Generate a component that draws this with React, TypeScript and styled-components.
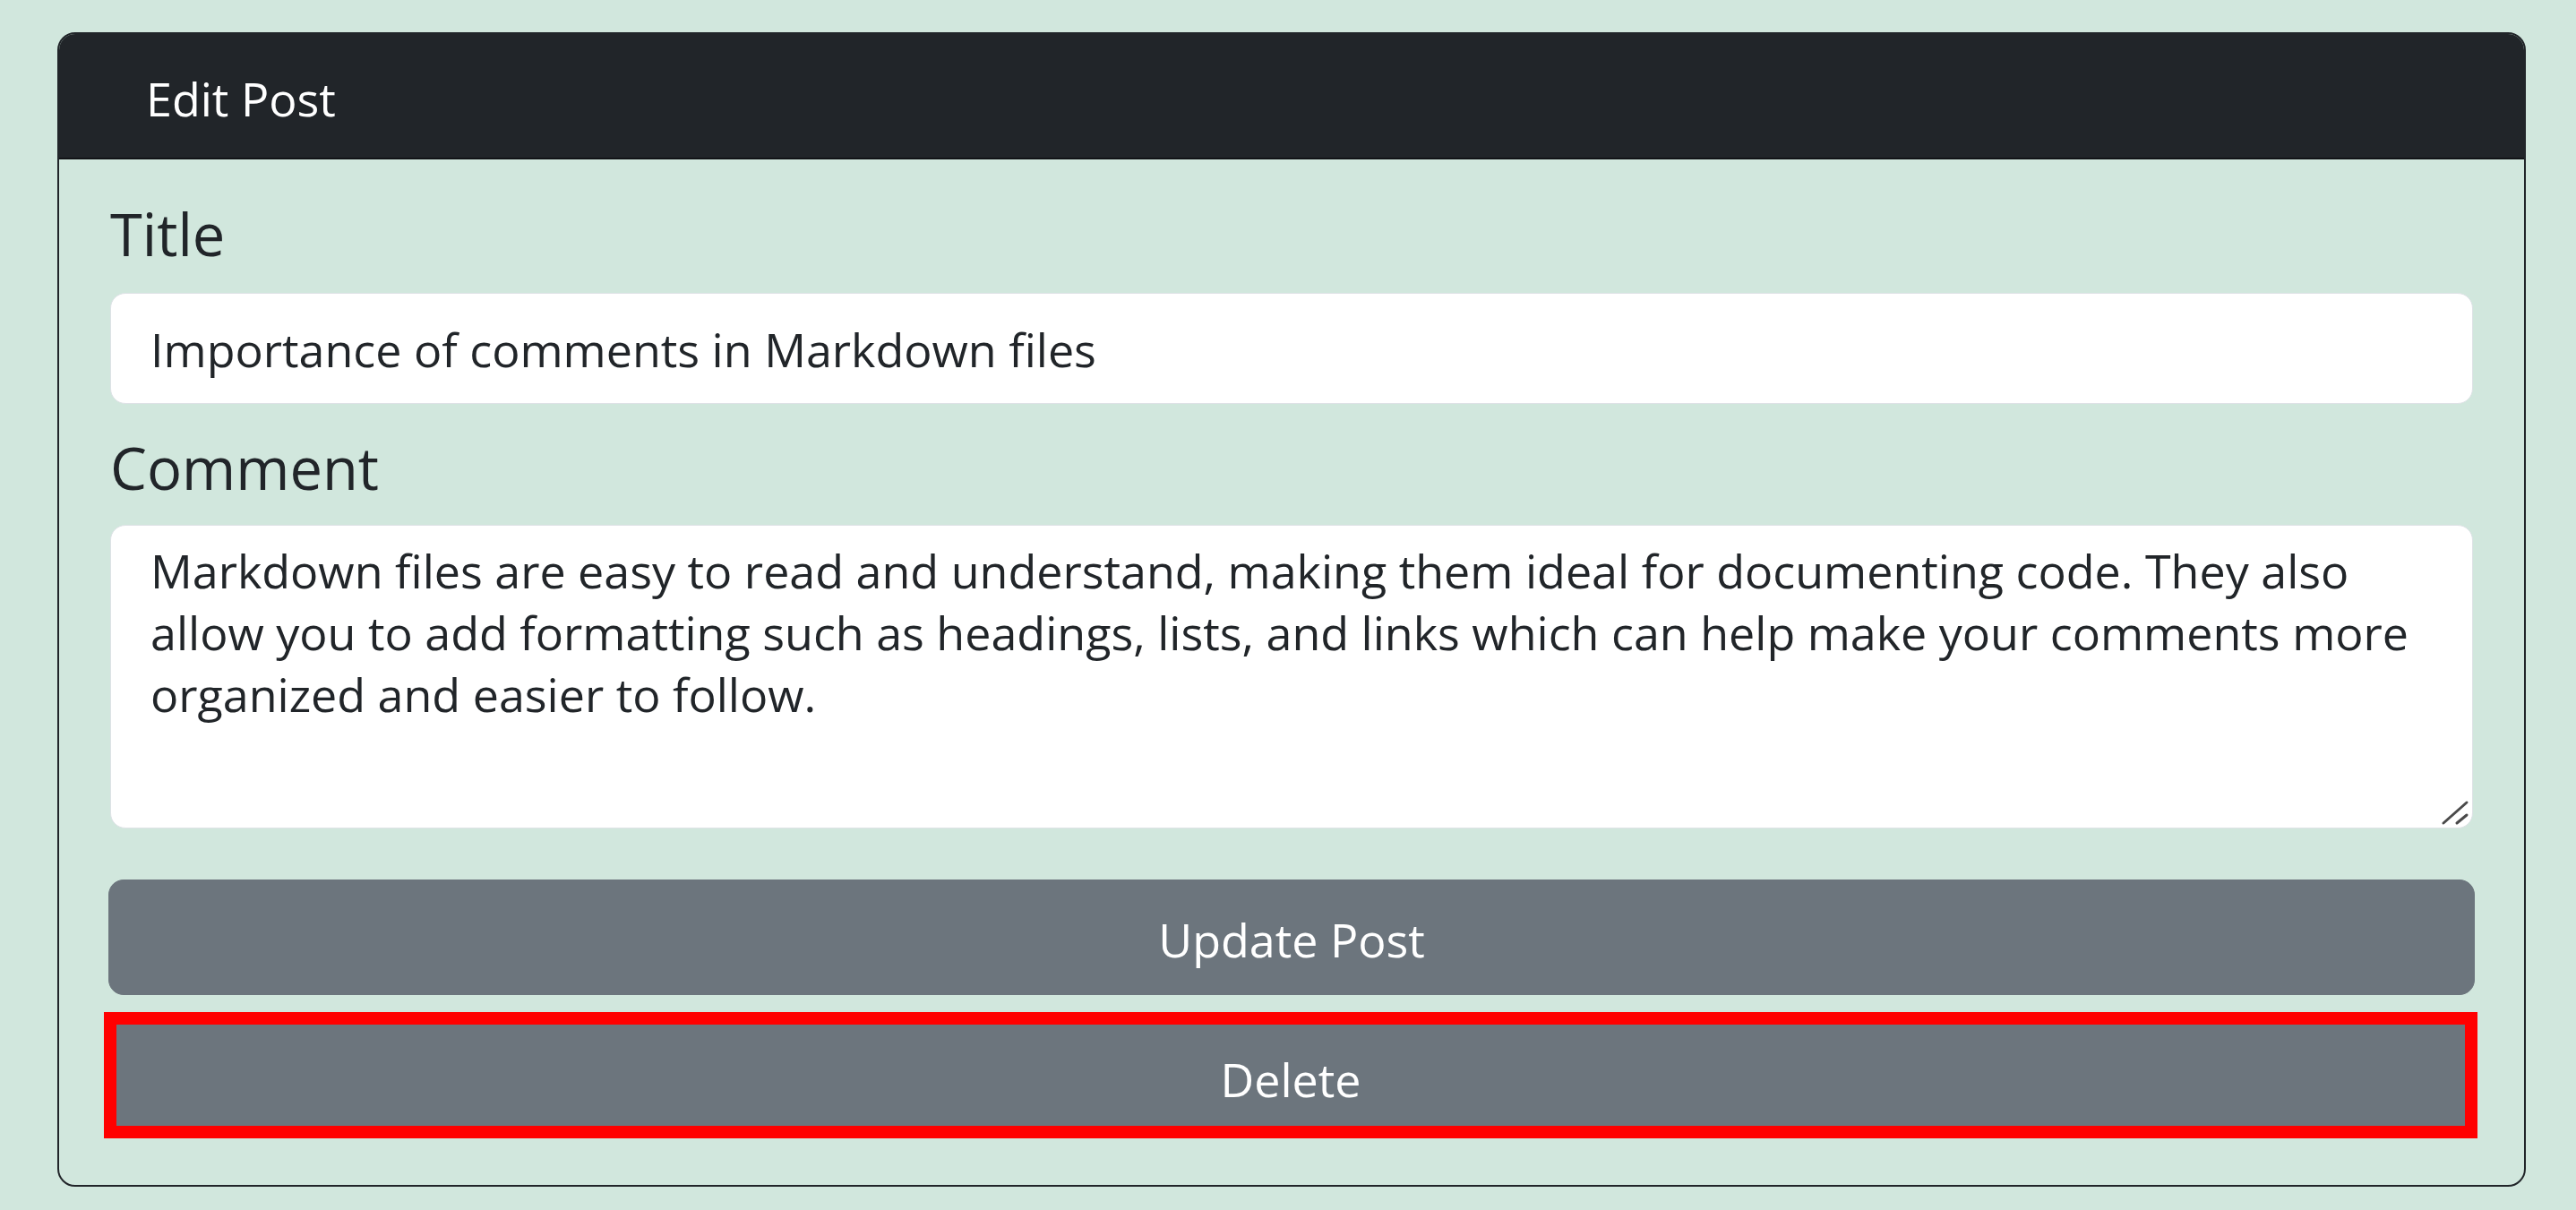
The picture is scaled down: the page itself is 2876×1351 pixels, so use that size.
import React from "react";
import styled, { createGlobalStyle } from "styled-components";

const GlobalStyle = createGlobalStyle`
  html, body {
    margin: 0;
    padding: 0;
    background: #d1e7dd;
  }
  body {
    font-family: "Open Sans", "Noto Sans", "Liberation Sans", sans-serif;
    color: #212529;
  }
  * { box-sizing: border-box; }
`;

const Page = styled.div`
  min-height: 100vh;
  padding: 36px 56px 26px 64px;
  background: #d1e7dd;
`;

const Card = styled.section`
  border: 2px solid #212529;
  border-radius: 20px;
  overflow: hidden;
  background: #d1e7dd;
`;

const CardHeader = styled.header`
  height: 140px;
  display: flex;
  align-items: center;
  padding: 4px 0 0 97px;
  background: #212529;
  border-bottom: 2px solid #121417;
`;

const HeaderTitle = styled.h5`
  margin: 0;
  font-size: 52px;
  font-weight: 400;
  line-height: 69px;
  color: #ffffff;
`;

const CardBody = styled.div`
  padding: 44px 57px 52px;
`;

const Form = styled.form`
  display: flex;
  flex-direction: column;
`;

const Group = styled.div<{ $mb: number }>`
  display: flex;
  flex-direction: column;
  margin-bottom: ${(p) => p.$mb}px;
`;

const Label = styled.label<{ $mb: number }>`
  font-size: 65px;
  line-height: 78px;
  font-weight: 400;
  color: #212529;
  margin-bottom: ${(p) => p.$mb}px;
`;

const TextInput = styled.input`
  height: 124px;
  width: 100%;
  padding: 0 44px;
  border: 1px solid #dee2e6;
  border-radius: 17px;
  background: #ffffff;
  font-family: inherit;
  font-size: 52px;
  color: #212529;
  outline: none;
`;

const AreaWrap = styled.div`
  position: relative;
`;

const TextArea = styled.textarea`
  display: block;
  width: 100%;
  height: 339px;
  padding: 15px 32px 0 44px;
  border: 1px solid #dee2e6;
  border-radius: 17px;
  background: #ffffff;
  font-family: inherit;
  font-size: 52px;
  line-height: 69px;
  color: #212529;
  resize: none;
  overflow: hidden;
  outline: none;
`;

const Grip = styled.svg`
  position: absolute;
  right: 3px;
  bottom: 3px;
  width: 34px;
  height: 30px;
  pointer-events: none;
`;

const Actions = styled.div`
  display: flex;
  flex-direction: column;
  gap: 19px;
`;

const ActionButton = styled.button<{ $outlined?: boolean }>`
  display: block;
  height: ${(p) => (p.$outlined ? 141 : 129)}px;
  margin: ${(p) => (p.$outlined ? "0 -5px 0 -7px" : "0 -2px")};
  padding: ${(p) => (p.$outlined ? "8px 0 0" : "4px 0 0")};
  background: #6c757d;
  border: ${(p) => (p.$outlined ? "14px solid #ff0000" : "1px solid #6c757d")};
  border-radius: ${(p) => (p.$outlined ? "0" : "17px")};
  color: #ffffff;
  font-family: inherit;
  font-size: 52px;
  line-height: 69px;
  font-weight: 400;
  text-align: center;
  cursor: pointer;
`;

export default function App() {
  return (
    <>
      <GlobalStyle />
      <Page>
        <Card>
          <CardHeader>
            <HeaderTitle>Edit Post</HeaderTitle>
          </CardHeader>
          <CardBody>
            <Form onSubmit={(e) => e.preventDefault()}>
              <Group $mb={32}>
                <Label $mb={27} htmlFor="title">Title</Label>
                <TextInput
                  id="title"
                  type="text"
                  defaultValue="Importance of comments in Markdown files"
                />
              </Group>
              <Group $mb={57}>
                <Label $mb={25} htmlFor="comment">Comment</Label>
                <AreaWrap>
                  <TextArea
                    id="comment"
                    defaultValue="Markdown files are easy to read and understand, making them ideal for documenting code. They also allow you to add formatting such as headings, lists, and links which can help make your comments more organized and easier to follow."
                  />
                  <Grip viewBox="0 0 34 30" aria-hidden="true">
                    <line x1="4" y1="27" x2="30" y2="4" stroke="#4a4a4a" strokeWidth="3" strokeLinecap="round" />
                    <line x1="19" y1="27" x2="30" y2="18" stroke="#4a4a4a" strokeWidth="3" strokeLinecap="round" />
                  </Grip>
                </AreaWrap>
              </Group>
              <Actions>
                <ActionButton type="submit">Update Post</ActionButton>
                <ActionButton type="button" $outlined>Delete</ActionButton>
              </Actions>
            </Form>
          </CardBody>
        </Card>
      </Page>
    </>
  );
}
